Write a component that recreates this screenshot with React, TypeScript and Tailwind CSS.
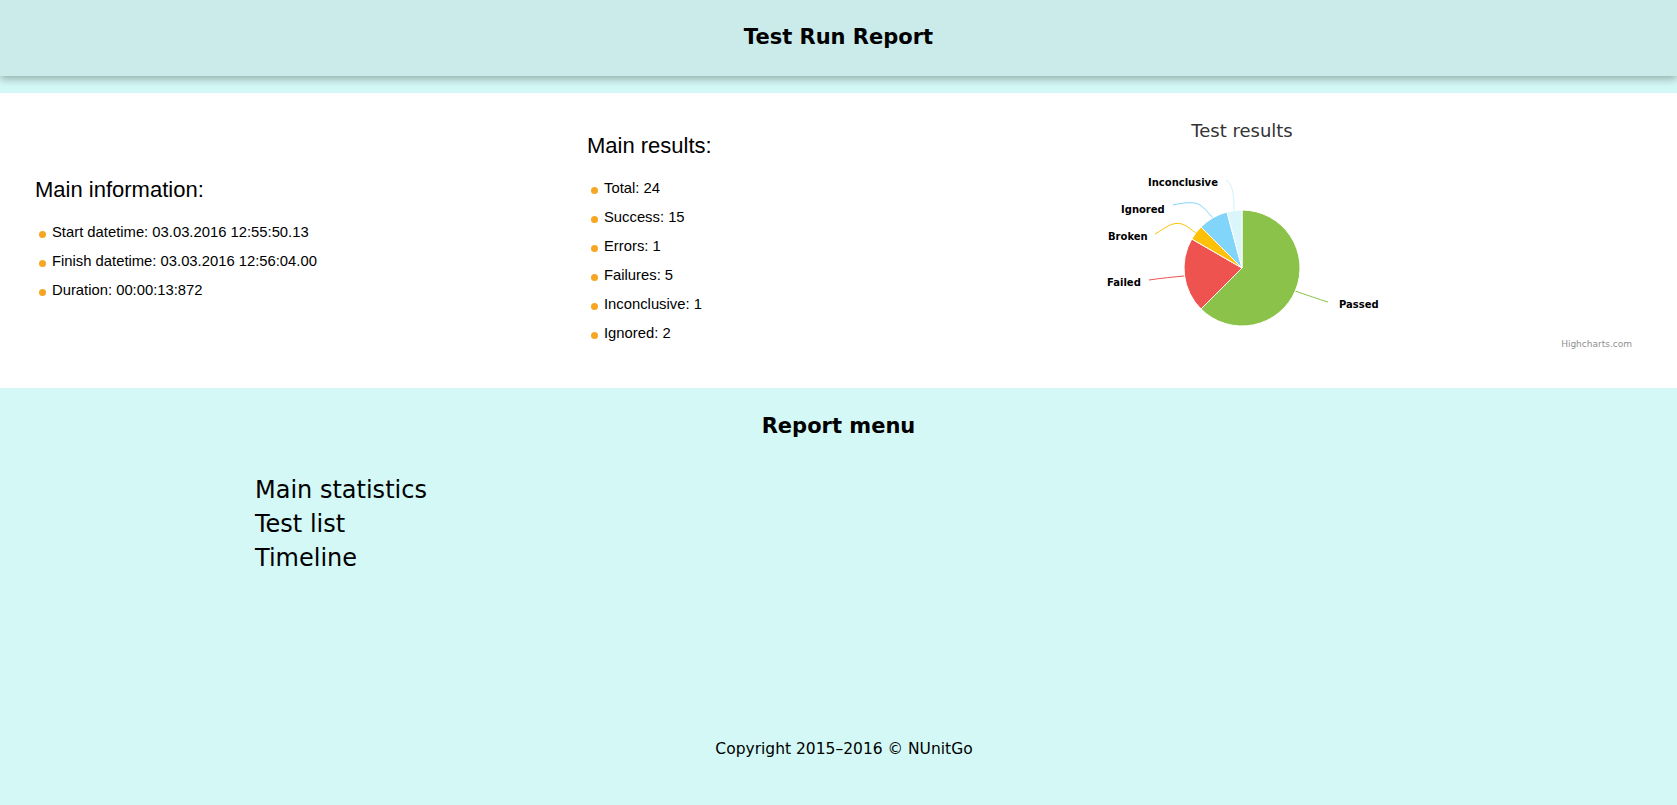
import React from 'react';

// Static report data - mirrors the NUnitGo summary page.
const mainInfo = [
  'Start datetime: 03.03.2016 12:55:50.13',
  'Finish datetime: 03.03.2016 12:56:04.00',
  'Duration: 00:00:13:872',
];

const mainResults = [
  'Total: 24',
  'Success: 15',
  'Errors: 1',
  'Failures: 5',
  'Inconclusive: 1',
  'Ignored: 2',
];

const menuItems = ['Main statistics', 'Test list', 'Timeline'];

interface InfoBlockProps {
  title: string;
  items: string[];
  className: string;
}

function InfoBlock({ title, items, className }: InfoBlockProps) {
  return (
    <div className={className}>
      <h2 className="text-[22px] leading-[26px] font-normal">{title}</h2>
      <ul className="mt-[15px]">
        {items.map((item) => (
          <li key={item} className="flex h-[29px] items-center text-[14.8px]">
            <span className="ml-[4px] mr-[6px] h-[7px] w-[7px] shrink-0 translate-y-[2px] rounded-full bg-[#f6a623]" />
            {item}
          </li>
        ))}
      </ul>
    </div>
  );
}

// Pie drawn like the Highcharts output: center (400,175), r=58, clockwise from 12 o'clock.
const slices = [
  { name: 'Passed', color: '#8bc34a', d: 'M400 175 L400 117 A58 58 0 1 1 358.99 216.01 Z' },
  { name: 'Failed', color: '#ef5350', d: 'M400 175 L358.99 216.01 A58 58 0 0 1 349.77 146 Z' },
  { name: 'Broken', color: '#ffc107', d: 'M400 175 L349.77 146 A58 58 0 0 1 358.99 133.99 Z' },
  { name: 'Ignored', color: '#81d4fa', d: 'M400 175 L358.99 133.99 A58 58 0 0 1 384.99 118.98 Z' },
  { name: 'Inconclusive', color: '#d9f6fa', d: 'M400 175 L384.99 118.98 A58 58 0 0 1 400 117 Z' },
];

const labels = [
  { text: 'Inconclusive', x: 306, y: 93, color: '#d0f2f7', line: 'M384 87 C390 90 392 100 392 117' },
  { text: 'Ignored', x: 279, y: 120, color: '#81d4fa', line: 'M331 112 C340 110 352 108 358 112 C364 116 366 120 371 125' },
  { text: 'Broken', x: 266, y: 147, color: '#ffc107', line: 'M313 141 C322 136 330 128 340 131 C346 133 349 137 354 140' },
  { text: 'Failed', x: 265, y: 193, color: '#ef5350', line: 'M307 187 C320 185 332 184 342 183' },
  { text: 'Passed', x: 497, y: 215, color: '#8bc34a', line: 'M453 198 C465 202 476 206 486 209' },
];

function ResultsChart() {
  return (
    <svg width="800" height="295" viewBox="0 0 800 295" className="shrink-0 font-['DejaVu_Sans',sans-serif]">
      <text x="400" y="44" textAnchor="middle" fontSize="18" fill="#333333">
        Test results
      </text>
      {labels.map((l) => (
        <path key={l.text + '-line'} d={l.line} fill="none" stroke={l.color} strokeWidth="1" />
      ))}
      {slices.map((s) => (
        <path key={s.name} d={s.d} fill={s.color} stroke="#ffffff" strokeWidth="1" strokeLinejoin="round" />
      ))}
      {labels.map((l) => (
        <text key={l.text} x={l.x} y={l.y} fontSize="10" fontWeight="bold" fill="#000000">
          {l.text}
        </text>
      ))}
      <text x="790" y="254" textAnchor="end" fontSize="9" fill="#909090">
        Highcharts.com
      </text>
    </svg>
  );
}

export default function App() {
  return (
    <div className="min-h-[805px] bg-[#d3f8f6] text-black">
      <header className="relative z-10 flex h-[76px] items-center justify-center bg-[#cbeaea] shadow-[0_3px_8px_rgba(0,0,0,0.3)]">
        <h1 className="font-['DejaVu_Sans',sans-serif] text-[21px] font-bold">Test Run Report</h1>
      </header>

      <section className="mt-[17px] flex h-[295px] items-center bg-white font-['Liberation_Sans',Arial,sans-serif]">
        <InfoBlock className="w-[552px] shrink-0 pl-[35px]" title="Main information:" items={mainInfo} />
        <InfoBlock className="w-[290px] shrink-0 pl-[35px]" title="Main results:" items={mainResults} />
        <ResultsChart />
      </section>

      <section className="pt-[25px] font-['DejaVu_Sans',sans-serif]">
        <h2 className="text-center text-[21px] leading-[26px] font-bold">Report menu</h2>
        <ul className="mt-[34px] pl-[255px]">
          {menuItems.map((item) => (
            <li key={item} className="text-[24px] leading-[34px]">
              {item}
            </li>
          ))}
        </ul>
        <footer className="mt-[164px] pl-[11px] text-center text-[15.5px] leading-[20px]">
          Copyright 2015–2016 © NUnitGo
        </footer>
      </section>
    </div>
  );
}
